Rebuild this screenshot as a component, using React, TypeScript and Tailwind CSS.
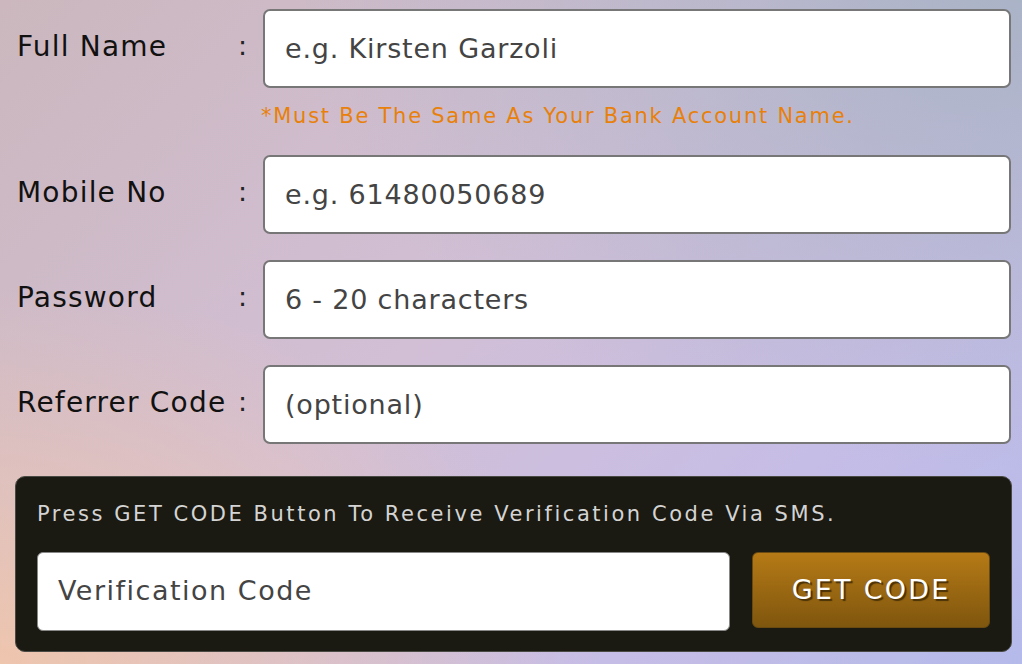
import React from 'react';

const font = { fontFamily: '"DejaVu Sans", "Noto Sans", sans-serif' };

interface FieldRowProps {
  label: string;
  placeholder: string;
  className?: string;
}

function FieldRow({ label, placeholder, className }: FieldRowProps) {
  return (
    <div className={`flex items-center ${className ?? ''}`}>
      <div className="w-[225px] pl-[17px] text-[28px] tracking-[1.2px] text-[#111] -mt-[4px] whitespace-nowrap">{label}</div>
      <div className="w-[38px] pl-[13px] text-[27px] text-[#222] -mt-[4px]">:</div>
      <div className="flex-1 mr-[11px] h-[79px] bg-white border-2 border-[#777] rounded-[7px] flex items-center pl-[20px]">
        <span className="text-[27px] tracking-[0.8px] text-[#444] mt-[1px]">{placeholder}</span>
      </div>
    </div>
  );
}

export default function App() {
  return (
    <div
      className="w-[1022px] h-[664px] overflow-hidden relative bg-[linear-gradient(135deg,#cbb7bd_0%,#d2bfd6_45%,#c6bde6_75%,#b4baea_100%)]"
      style={font}
    >
      <div className="absolute inset-0 bg-[radial-gradient(ellipse_at_0%_100%,rgba(240,198,172,0.95)_0%,rgba(240,198,172,0)_40%)]" />
      <div className="absolute inset-0 bg-[radial-gradient(ellipse_at_100%_0%,rgba(166,178,196,0.9)_0%,rgba(166,178,196,0)_50%)]" />
      <div className="relative pt-[9px]">
        <FieldRow label="Full Name" placeholder="e.g. Kirsten Garzoli" />
        <div className="pl-[261px] pt-[13px] h-[67px] text-[21px] tracking-[1.75px] text-[#e8800a] whitespace-nowrap">
          *Must Be The Same As Your Bank Account Name.
        </div>
        <FieldRow label="Mobile No" placeholder="e.g. 61480050689" />
        <FieldRow label="Password" placeholder="6 - 20 characters" className="mt-[26px]" />
        <FieldRow label="Referrer Code" placeholder="(optional)" className="mt-[26px]" />

        <div className="mt-[32px] ml-[15px] w-[997px] h-[176px] bg-[#1b1a12] border border-[#4a4a44] rounded-[10px] px-[21px] pt-[22px]">
          <div className="text-[21px] tracking-[2.55px] text-[#d4d4d4] leading-[30px] whitespace-nowrap">
            Press GET CODE Button To Receive Verification Code Via SMS.
          </div>
          <div className="flex gap-[22px] mt-[23px]">
            <div className="w-[694px] h-[79px] bg-white border border-[#888] rounded-[6px] flex items-center pl-[20px]">
              <span className="text-[27px] tracking-[1.5px] text-[#444]">Verification Code</span>
            </div>
            <button className="w-[238px] h-[76px] rounded-[6px] border border-[#6a4a10] bg-[linear-gradient(180deg,#b67a16_0%,#9a6812_50%,#7f560e_100%)] text-white text-[27px] tracking-[2.25px] [text-shadow:2px_2px_1px_#4a3208]">
              GET CODE
            </button>
          </div>
        </div>
      </div>
    </div>
  );
}
